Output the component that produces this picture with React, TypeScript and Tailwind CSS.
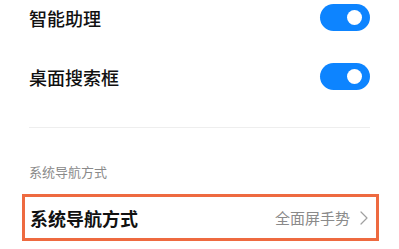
import React from 'react';

const Toggle = () => (
  <div className="w-[50px] h-[27px] rounded-full bg-[#0d84ff] flex items-center justify-end pr-[8px]">
    <div className="w-[15px] h-[15px] rounded-full bg-white" />
  </div>
);

const App = () => {
  return (
    <div
      className="w-[399px] h-[249px] bg-white overflow-hidden"
      style={{ fontFamily: '"Noto Sans CJK SC", "Noto Sans", sans-serif' }}
    >
      <div className="h-[35px] flex items-center justify-between pl-[29px] pr-[29px]">
        <span className="text-[18px] leading-none font-medium text-[#111]">智能助理</span>
        <Toggle />
      </div>
      <div className="mt-[24px] h-[35px] flex items-center justify-between pl-[29px] pr-[29px]">
        <span className="text-[18px] leading-none font-medium text-[#111]">桌面搜索框</span>
        <Toggle />
      </div>

      <div className="mt-[33px] mx-[29px] h-px bg-[#eeeeee]" />

      <div className="mt-[34px] h-[18px] pl-[29px] flex items-center">
        <span className="text-[13px] leading-none text-[#8a8a8a]">系统导航方式</span>
      </div>

      <div className="mt-[14px] ml-[22px] w-[357px] h-[47px] border-[3px] border-[#ee6a40] flex items-center justify-between pl-[5px] pr-[8px]">
        <span className="text-[18px] leading-none font-semibold text-[#111]">系统导航方式</span>
        <div className="flex items-center gap-[10px]">
          <span className="text-[15px] leading-none text-[#8a8a8a]">全面屏手势</span>
          <svg width="8" height="14" viewBox="0 0 8 14" fill="none">
            <path d="M1 1 L7 7 L1 13" stroke="#a0a0a0" strokeWidth="1.2" strokeLinecap="round" strokeLinejoin="round" />
          </svg>
        </div>
      </div>
    </div>
  );
};

export default App;
